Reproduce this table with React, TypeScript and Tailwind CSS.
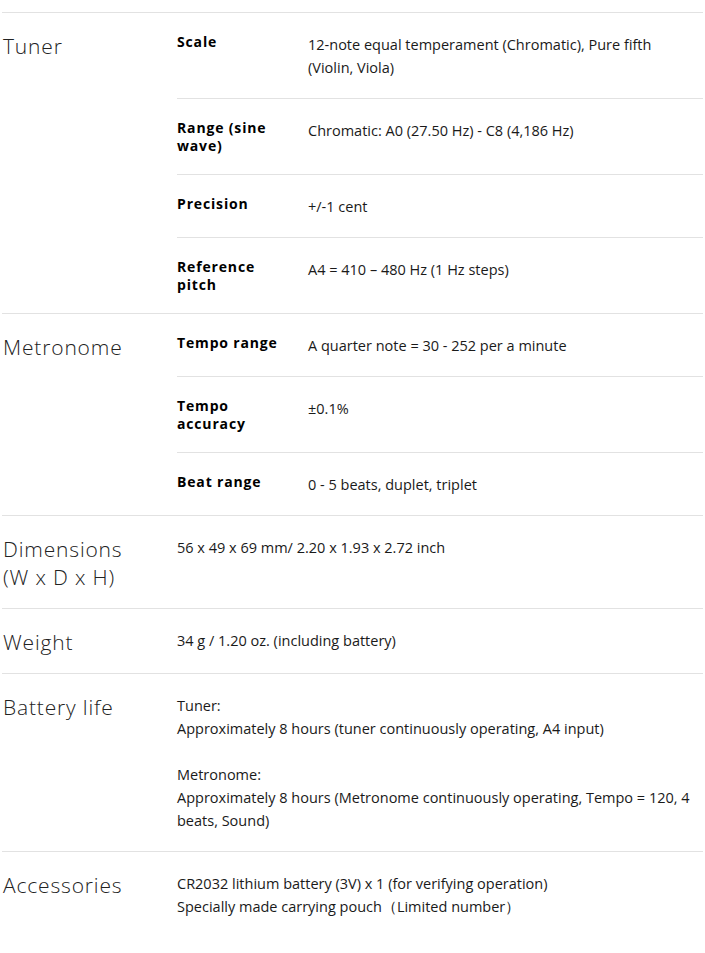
import React from "react";

type Row = { label: string; value: React.ReactNode };
type Section = { title: React.ReactNode; rows?: Row[]; value?: React.ReactNode };

const sections: Section[] = [
  {
    title: "Tuner",
    rows: [
      {
        label: "Scale",
        value: (
          <>
            12-note equal temperament (Chromatic), Pure fifth
            <br />
            (Violin, Viola)
          </>
        ),
      },
      { label: "Range (sine wave)", value: "Chromatic: A0 (27.50 Hz) - C8 (4,186 Hz)" },
      { label: "Precision", value: "+/-1 cent" },
      { label: "Reference pitch", value: "A4 = 410 – 480 Hz (1 Hz steps)" },
    ],
  },
  {
    title: "Metronome",
    rows: [
      { label: "Tempo range", value: "A quarter note = 30 - 252 per a minute" },
      { label: "Tempo accuracy", value: "±0.1%" },
      { label: "Beat range", value: "0 - 5 beats, duplet, triplet" },
    ],
  },
  {
    title: (
      <>
        Dimensions
        <br />
        (W x D x H)
      </>
    ),
    value: "56 x 49 x 69 mm/ 2.20 x 1.93 x 2.72 inch",
  },
  { title: "Weight", value: "34 g / 1.20 oz. (including battery)" },
  {
    title: "Battery life",
    value: (
      <>
        Tuner:
        <br />
        Approximately 8 hours (tuner continuously operating, A4 input)
        <br />
        <br />
        Metronome:
        <br />
        Approximately 8 hours (Metronome continuously operating, Tempo = 120, 4 beats, Sound)
      </>
    ),
  },
  {
    title: "Accessories",
    value: (
      <>
        CR2032 lithium battery (3V) x 1 (for verifying operation)
        <br />
        Specially made carrying pouch（Limited number）
      </>
    ),
  },
];

export default function App() {
  return (
    <div className="w-[705px] min-h-[953px] bg-white px-[2px] pt-3 font-['Open_Sans',sans-serif] text-[#1a1a1a]">
      {sections.map((s, i) => (
        <div key={i} className="flex border-t border-[#e2e2e2]">
          {/* Category name */}
          <div className="w-[175px] shrink-0 pl-px pt-[19px] pb-[17px] text-[21px] leading-[28px] font-light tracking-[0.04em] text-[#222]">
            {s.title}
          </div>

          {s.rows ? (
            <div className="flex-1">
              {s.rows.map((r, j) => (
                <div key={j} className={`flex pt-5 pb-[19px] ${j > 0 ? "border-t border-[#e2e2e2]" : ""}`}>
                  <div className="w-[131px] shrink-0 pr-[22px] text-[14px] leading-[18px] font-bold tracking-[0.06em] text-black">
                    {r.label}
                  </div>
                  <div className="flex-1 pr-1 text-[14.5px] leading-[23px]">{r.value}</div>
                </div>
              ))}
            </div>
          ) : (
            <div className="flex-1 pt-5 pb-[19px] pr-1 text-[14.5px] leading-[23px]">{s.value}</div>
          )}
        </div>
      ))}
    </div>
  );
}
